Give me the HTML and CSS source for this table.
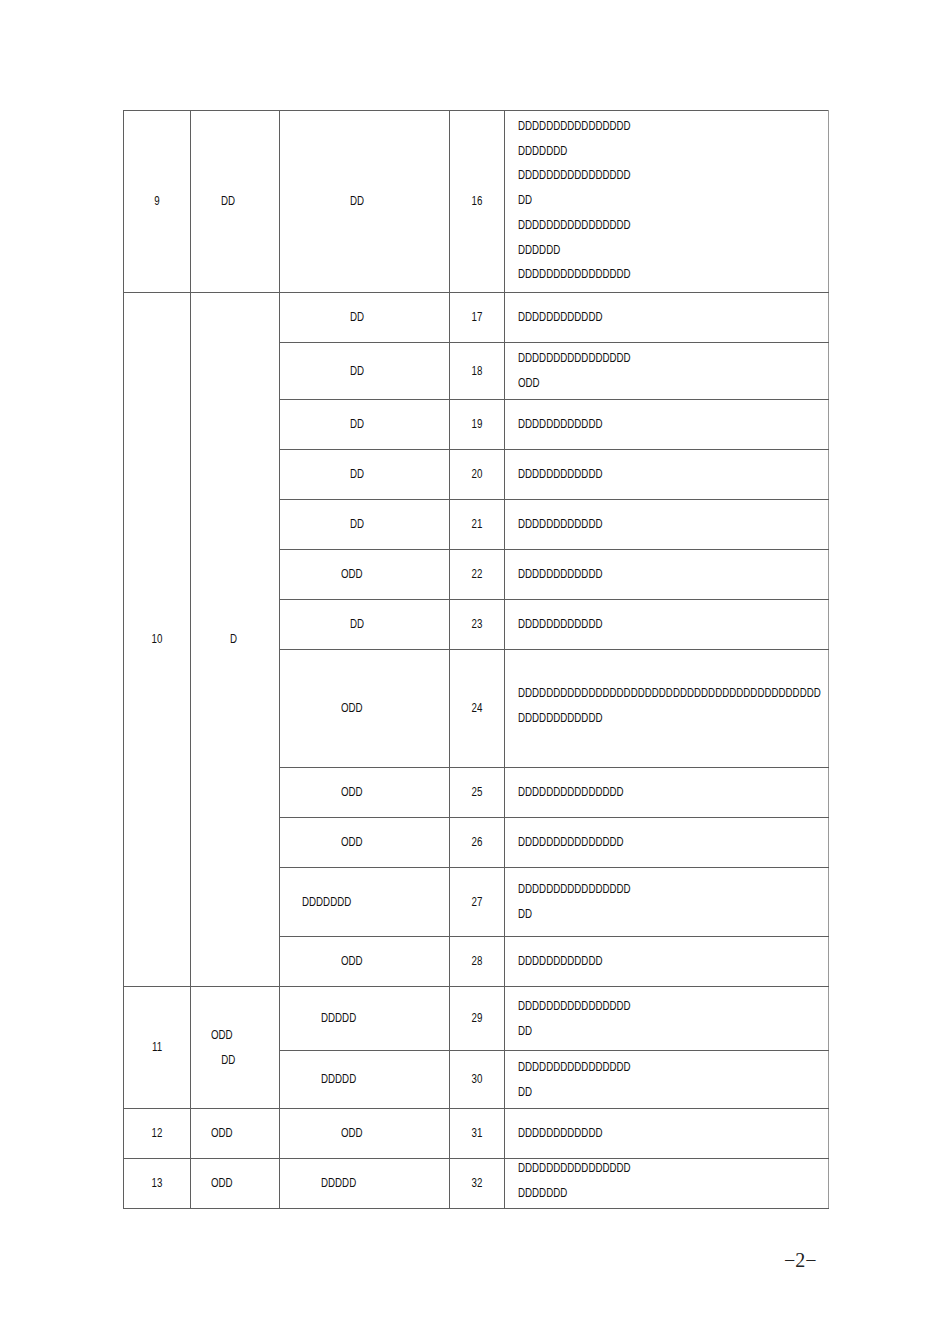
FILE: index.html
```html
<!DOCTYPE html>
<html>
<head>
<meta charset="utf-8">
<link rel="stylesheet" href="styles.css">
</head>
<body>
<div class="page">
<table class="grid">
<colgroup>
<col class="w1"><col class="w2"><col class="w3"><col class="w4"><col class="w5">
</colgroup>
<tbody>
<tr class="h182">
<td class="num"><div class="s">9</div></td>
<td class="c2 i-dd"><div class="s">DD</div></td>
<td class="c3 i-dd"><div class="s">DD</div></td>
<td class="num"><div class="s">16</div></td>
<td class="txt up2"><div class="s">DDDDDDDDDDDDDDDD<br>DDDDDDD<br>DDDDDDDDDDDDDDDD<br>DD<br>DDDDDDDDDDDDDDDD<br>DDDDDD<br>DDDDDDDDDDDDDDDD</div></td>
</tr>
<tr class="h50">
<td class="num" rowspan="12"><div class="s">10</div></td>
<td class="c2 i-d" rowspan="12"><div class="s">D</div></td>
<td class="c3 i-dd"><div class="s">DD</div></td>
<td class="num"><div class="s">17</div></td>
<td class="txt"><div class="s">DDDDDDDDDDDD</div></td>
</tr>
<tr class="h57">
<td class="c3 i-dd"><div class="s">DD</div></td>
<td class="num"><div class="s">18</div></td>
<td class="txt"><div class="s">DDDDDDDDDDDDDDDD<br>ODD</div></td>
</tr>
<tr class="h50">
<td class="c3 i-dd"><div class="s">DD</div></td>
<td class="num"><div class="s">19</div></td>
<td class="txt"><div class="s">DDDDDDDDDDDD</div></td>
</tr>
<tr class="h50">
<td class="c3 i-dd"><div class="s">DD</div></td>
<td class="num"><div class="s">20</div></td>
<td class="txt"><div class="s">DDDDDDDDDDDD</div></td>
</tr>
<tr class="h50">
<td class="c3 i-dd"><div class="s">DD</div></td>
<td class="num"><div class="s">21</div></td>
<td class="txt"><div class="s">DDDDDDDDDDDD</div></td>
</tr>
<tr class="h50">
<td class="c3 i-odd"><div class="s">ODD</div></td>
<td class="num"><div class="s">22</div></td>
<td class="txt"><div class="s">DDDDDDDDDDDD</div></td>
</tr>
<tr class="h50">
<td class="c3 i-dd"><div class="s">DD</div></td>
<td class="num"><div class="s">23</div></td>
<td class="txt"><div class="s">DDDDDDDDDDDD</div></td>
</tr>
<tr class="h118">
<td class="c3 i-odd"><div class="s">ODD</div></td>
<td class="num"><div class="s">24</div></td>
<td class="txt up6"><div class="s">DDDDDDDDDDDDDDDDDDDDDDDDDDDDDDDDDDDDDDDDDDD<br>DDDDDDDDDDDD</div></td>
</tr>
<tr class="h50">
<td class="c3 i-odd"><div class="s">ODD</div></td>
<td class="num"><div class="s">25</div></td>
<td class="txt"><div class="s">DDDDDDDDDDDDDDD</div></td>
</tr>
<tr class="h50">
<td class="c3 i-odd"><div class="s">ODD</div></td>
<td class="num"><div class="s">26</div></td>
<td class="txt"><div class="s">DDDDDDDDDDDDDDD</div></td>
</tr>
<tr class="h69">
<td class="c3 i-7"><div class="s">DDDDDDD</div></td>
<td class="num"><div class="s">27</div></td>
<td class="txt"><div class="s">DDDDDDDDDDDDDDDD<br>DD</div></td>
</tr>
<tr class="h50">
<td class="c3 i-odd"><div class="s">ODD</div></td>
<td class="num"><div class="s">28</div></td>
<td class="txt"><div class="s">DDDDDDDDDDDD</div></td>
</tr>
<tr class="h64">
<td class="num" rowspan="2"><div class="s">11</div></td>
<td class="c2 i-odd2" rowspan="2"><div class="s">ODD<br><span class="l-dd">DD</span></div></td>
<td class="c3 i-5"><div class="s">DDDDD</div></td>
<td class="num"><div class="s">29</div></td>
<td class="txt"><div class="s">DDDDDDDDDDDDDDDD<br>DD</div></td>
</tr>
<tr class="h58">
<td class="c3 i-5"><div class="s">DDDDD</div></td>
<td class="num"><div class="s">30</div></td>
<td class="txt"><div class="s">DDDDDDDDDDDDDDDD<br>DD</div></td>
</tr>
<tr class="h50">
<td class="num"><div class="s">12</div></td>
<td class="c2 i-odd2"><div class="s">ODD</div></td>
<td class="c3 i-odd"><div class="s">ODD</div></td>
<td class="num"><div class="s">31</div></td>
<td class="txt"><div class="s">DDDDDDDDDDDD</div></td>
</tr>
<tr class="h50">
<td class="num"><div class="s">13</div></td>
<td class="c2 i-odd2"><div class="s">ODD</div></td>
<td class="c3 i-5"><div class="s">DDDDD</div></td>
<td class="num"><div class="s">32</div></td>
<td class="txt"><div class="s lift">DDDDDDDDDDDDDDDD<br>DDDDDDD</div></td>
</tr>
</tbody>
</table>
<div class="pageno">−2−</div>
</div>
</body>
</html>
```

FILE: styles.css
```css
html, body {
  margin: 0;
  padding: 0;
  background: #ffffff;
}
.page {
  width: 950px;
  height: 1344px;
  padding-top: 110px;
  padding-left: 123px;
  box-sizing: border-box;
  position: relative;
}
.grid {
  border-collapse: collapse;
  table-layout: fixed;
  width: 705px;
  font-family: "Liberation Sans", Arial, sans-serif;
  font-size: 12.5px;
  line-height: 24.7px;
  color: #111;
  border: 1px solid #9a9a9a;
}
.w1 { width: 67px; }
.w2 { width: 89px; }
.w3 { width: 170px; }
.w4 { width: 55px; }
.w5 { width: 324px; }
.grid td {
  border: 1px solid #5f5f5f;
  padding: 0;
  vertical-align: middle;
  white-space: nowrap;
  overflow: visible;
}
.grid td.txt {
  border-left: 1px solid #a8a8a8;
  border-right: 1px solid #9a9a9a;
  padding-left: 13px;
}
.grid td.up2 { padding-bottom: 2px; }
.grid td.up6 { padding-bottom: 6px; }
.s {
  display: block;
  transform: scaleX(0.78);
  transform-origin: left center;
}
.s.lift { margin-top: -6px; }
.num { text-align: center; }
.num .s { transform-origin: center center; }
.c2, .c3 { text-align: left; }
.c2.i-dd { padding-left: 30px; }
.c2.i-d { padding-left: 39px; }
.c2.i-odd2 { padding-left: 20px; }
.l-dd { padding-left: 13px; }
.c3.i-dd { padding-left: 70px; }
.c3.i-odd { padding-left: 61px; }
.c3.i-5 { padding-left: 41px; }
.c3.i-7 { padding-left: 22px; }
.h182 { height: 182px; }
.h50 { height: 50px; }
.h57 { height: 57px; }
.h58 { height: 58px; }
.h64 { height: 64px; }
.h69 { height: 69px; }
.h118 { height: 118px; }
.pageno {
  position: absolute;
  left: 784px;
  top: 1249px;
  font-family: "Liberation Serif", serif;
  font-size: 20px;
  color: #222;
}
```
